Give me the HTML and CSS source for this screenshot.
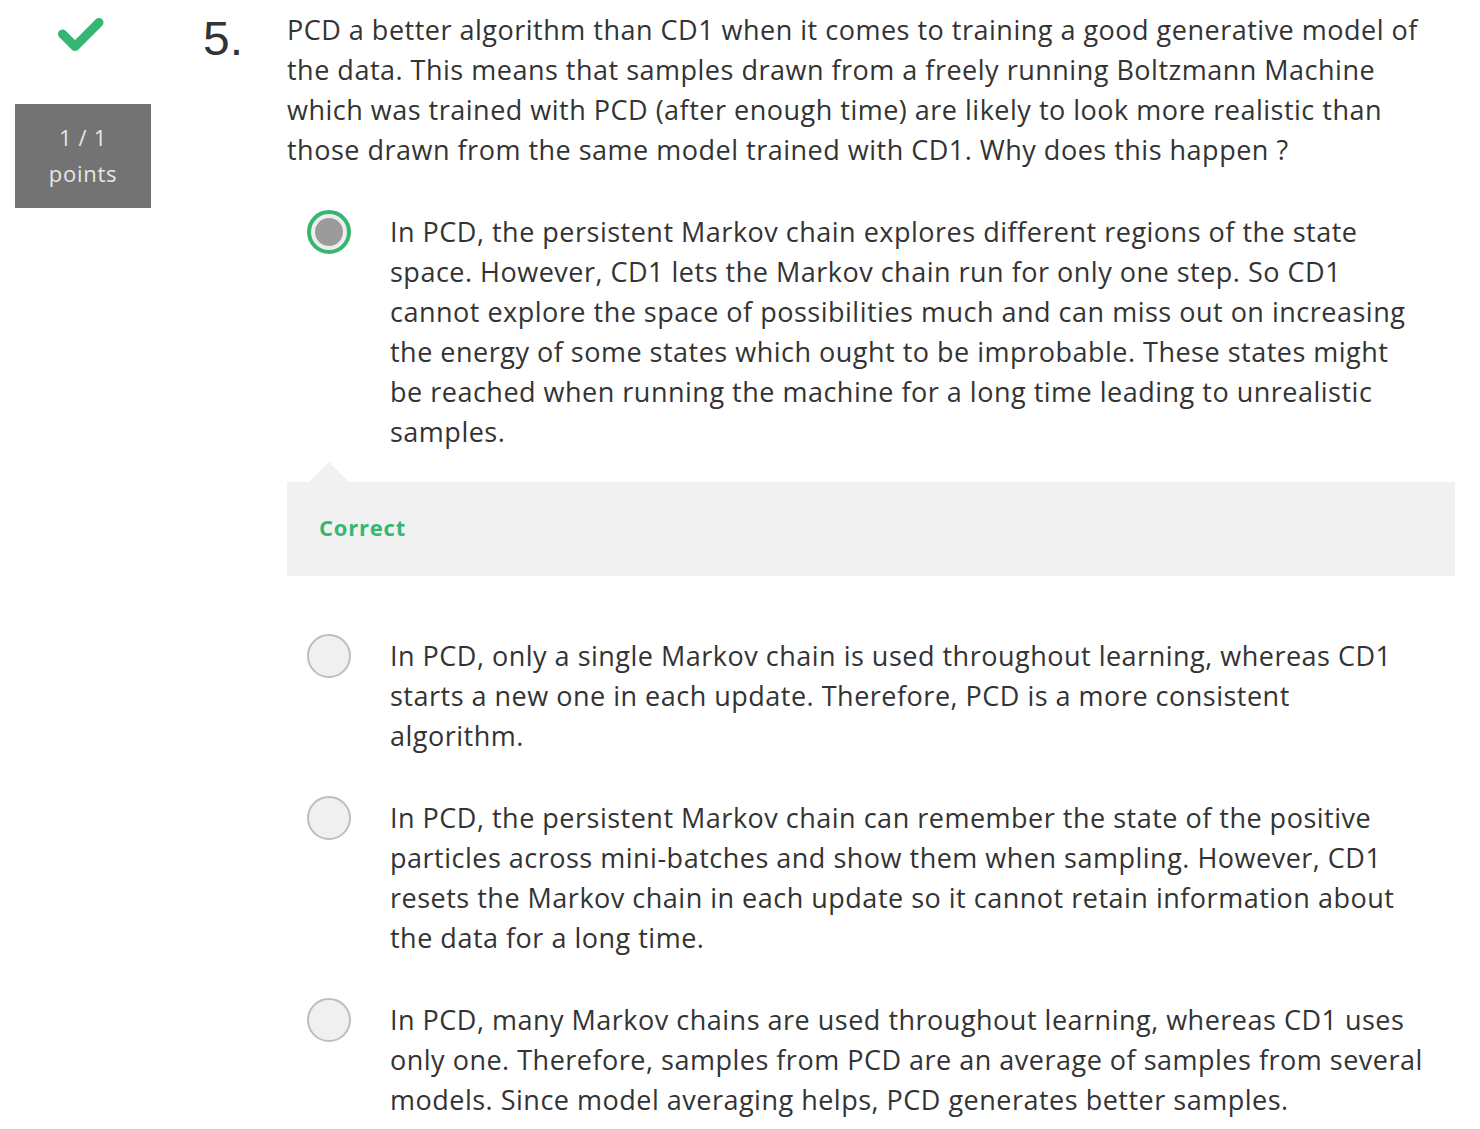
FILE: index.html
```html
<!DOCTYPE html>
<html lang="en">
<head>
<meta charset="utf-8">
<title>Quiz question 5</title>
<link rel="stylesheet" href="styles.css">
</head>
<body>
<div class="question">
  <div class="side">
    <svg class="check" width="46" height="36" viewBox="0 0 46 36" aria-hidden="true">
      <polyline points="4.5,17 17,29.5 41,5.5" fill="none" stroke="#37b673" stroke-width="9" stroke-linecap="round" stroke-linejoin="round"/>
    </svg>
    <div class="points">1 / 1<br>points</div>
  </div>
  <div class="num">5.</div>
  <div class="body">
    <p class="prompt">PCD a better algorithm than CD1 when it comes to training a good generative model of the data. This means that samples drawn from a freely running Boltzmann Machine which was trained with PCD (after enough time) are likely to look more realistic than those drawn from the same model trained with CD1. Why does this happen ?</p>

    <div class="option">
      <span class="radio selected"><span class="dot"></span></span>
      <span class="label">In PCD, the persistent Markov chain explores different regions of the state space. However, CD1 lets the Markov chain run for only one step. So CD1 cannot explore the space of possibilities much and can miss out on increasing the energy of some states which ought to be improbable. These states might be reached when running the machine for a long time leading to unrealistic samples.</span>
    </div>
    <div class="feedback">
      <span class="arrow"></span>
      <span class="verdict">Correct</span>
    </div>

    <div class="option">
      <span class="radio"></span>
      <span class="label">In PCD, only a single Markov chain is used throughout learning, whereas CD1 starts a new one in each update. Therefore, PCD is a more consistent algorithm.</span>
    </div>

    <div class="option">
      <span class="radio"></span>
      <span class="label">In PCD, the persistent Markov chain can remember the state of the positive particles across mini-batches and show them when sampling. However, CD1 resets the Markov chain in each update so it cannot retain information about the data for a long time.</span>
    </div>

    <div class="option">
      <span class="radio"></span>
      <span class="label">In PCD, many Markov chains are used throughout learning, whereas CD1 uses only one. Therefore, samples from PCD are an average of samples from several models. Since model averaging helps, PCD generates better samples.</span>
    </div>
  </div>
</div>
</body>
</html>
```

FILE: styles.css
```css
html, body {
  margin: 0;
  padding: 0;
  background: #ffffff;
}

body {
  font-family: "Open Sans", "Liberation Sans", sans-serif;
  color: #333333;
}

.question {
  display: flex;
  align-items: flex-start;
}

.side {
  width: 136px;
  margin-left: 15px;
  display: flex;
  flex-direction: column;
  align-items: center;
}

.check {
  display: block;
  margin-top: 17px;
  margin-right: 4px;
}

.points {
  margin-top: 51px;
  width: 136px;
  box-sizing: border-box;
  padding: 15px 0;
  height: 104px;
  background: #737373;
  color: #e6e6e6;
  text-align: center;
  font-size: 22px;
  line-height: 36px;
  letter-spacing: 0.7px;
}

.num {
  margin-left: 52px;
  width: 84px;
  margin-top: 15px;
  font-family: "Liberation Sans", Arial, sans-serif;
  font-size: 48px;
  line-height: 48px;
  color: #333333;
}

.body {
  flex: 1;
  margin-right: 25px;
  padding-bottom: 10px;
}

.prompt {
  margin: 10px 0 0 0;
  font-size: 27px;
  line-height: 40px;
  letter-spacing: 0.5px;
}

.option {
  display: flex;
  align-items: flex-start;
  margin-top: 42px;
  padding-left: 20px;
  padding-right: 30px;
}

.feedback + .option {
  margin-top: 60px;
}

.radio {
  flex: none;
  width: 44px;
  height: 44px;
  box-sizing: border-box;
  border-radius: 50%;
  border: 2px solid #bdbdbd;
  background: #f0f0f0;
  margin-top: -2px;
  margin-right: 39px;
  display: flex;
  align-items: center;
  justify-content: center;
}

.radio.selected {
  border: 4px solid #37b673;
  background: #eeeeee;
}

.radio .dot {
  width: 28px;
  height: 28px;
  border-radius: 50%;
  background: #9b9b9b;
}

.label {
  font-size: 27px;
  line-height: 40px;
  letter-spacing: 0.5px;
}

.feedback {
  position: relative;
  margin-top: 30px;
  height: 94px;
  box-sizing: border-box;
  background: #f1f1f1;
  padding-left: 32px;
  display: flex;
  align-items: center;
}

.arrow {
  position: absolute;
  left: 22px;
  top: -20px;
  width: 0;
  height: 0;
  border-left: 20px solid transparent;
  border-right: 20px solid transparent;
  border-bottom: 20px solid #f1f1f1;
}

.verdict {
  color: #37b673;
  font-weight: 700;
  font-size: 22px;
  line-height: 30px;
  letter-spacing: 0.8px;
  margin-top: -5px;
}
```
